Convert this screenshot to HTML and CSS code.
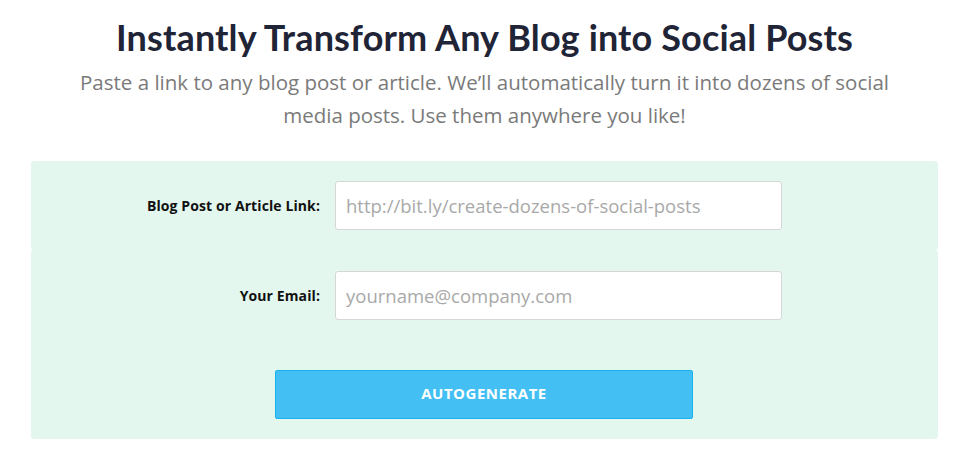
FILE: index.html
```html
<!DOCTYPE html>
<html>
<head>
<meta charset="utf-8">
<link rel="stylesheet" href="styles.css">
</head>
<body>
<div class="page">
  <h1 class="title">Instantly Transform Any Blog into Social Posts</h1>
  <p class="subtitle">Paste a link to any blog post or article. We’ll automatically turn it into dozens of social media posts. Use them anywhere you like!</p>
  <form class="form">
    <div class="panel panel-top">
      <div class="row">
        <label class="label">Blog Post or Article Link:</label>
        <input class="input" type="text" placeholder="http://bit.ly/create-dozens-of-social-posts">
      </div>
    </div>
    <div class="panel panel-bottom">
      <div class="row">
        <label class="label">Your Email:</label>
        <input class="input" type="text" placeholder="yourname@company.com">
      </div>
      <div class="actions">
        <button class="button" type="button">AUTOGENERATE</button>
      </div>
    </div>
  </form>
</div>
</body>
</html>
```
FILE: styles.css
```css
html, body {
  margin: 0;
  padding: 0;
  background: #ffffff;
}
body {
  font-family: "Open Sans", "Lato", sans-serif;
}
.page {
  width: 907px;
  margin-left: 31px;
  padding-top: 14px;
}
.title {
  margin: 0;
  text-align: center;
  font-family: "Lato", sans-serif;
  font-size: 36px;
  line-height: 46px;
  font-weight: 700;
  letter-spacing: 0.15px;
  color: #1f2436;
}
.subtitle {
  margin: 6px auto 0;
  width: 850px;
  text-align: center;
  font-size: 20.5px;
  line-height: 33px;
  color: #7a7a7a;
}
.form {
  margin-top: 29px;
  display: flex;
  flex-direction: column;
}
.panel {
  background: #e3f7ef;
  border-radius: 3px;
}
.panel-top {
  padding: 20px 0 20px;
}
.panel-bottom {
  padding: 21px 0 20px;
}
.row {
  display: grid;
  grid-template-columns: 289px 447px;
  column-gap: 15px;
  align-items: center;
}
.label {
  text-align: right;
  font-size: 14px;
  font-weight: 700;
  letter-spacing: 0.1px;
  color: #111111;
}
.input {
  box-sizing: border-box;
  height: 49px;
  width: 447px;
  padding: 0 10px;
  border: 1px solid #d6d6d6;
  border-radius: 3px;
  background: #ffffff;
  font-family: "Open Sans", "Lato", sans-serif;
  font-size: 18.5px;
  color: #333;
}
.input::placeholder {
  color: #a9a9a9;
}
.actions {
  display: flex;
  justify-content: center;
  margin-top: 50px;
}
.button {
  box-sizing: border-box;
  width: 418px;
  height: 49px;
  margin-left: -1px;
  padding: 0 0 3px;
  background: #43bff3;
  border: 1px solid #1ab2ee;
  border-radius: 2px;
  color: #ffffff;
  font-family: "Open Sans", "Lato", sans-serif;
  font-size: 15px;
  font-weight: 700;
  letter-spacing: 0.5px;
}
```
